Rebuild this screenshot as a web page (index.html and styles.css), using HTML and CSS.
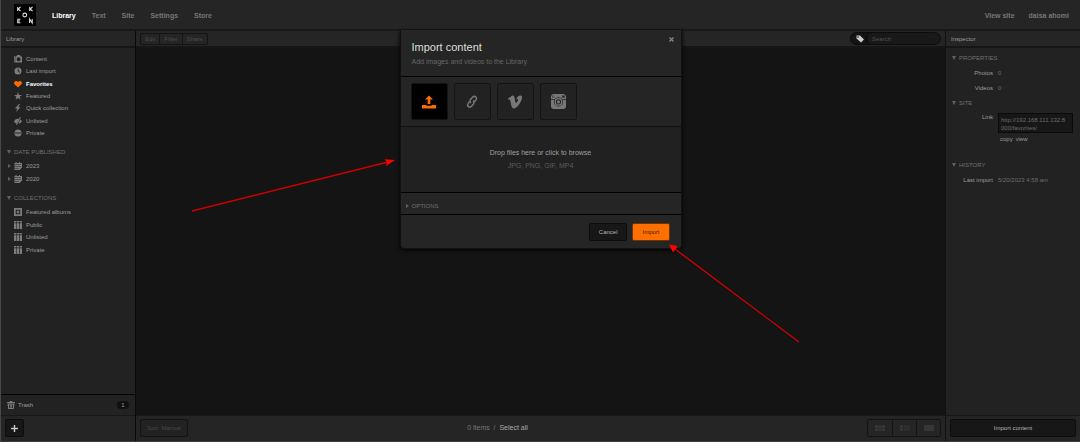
FILE: index.html
```html
<!DOCTYPE html>
<html lang="en">

<head>
    <meta charset="UTF-8">
    <meta name="viewport" content="width=device-width, initial-scale=1.0">
    <title>Koken - Library</title>
    <link rel="stylesheet" href="styles.css">
</head>

<body>
    <header class="topbar">
        <a class="logo" href="#" aria-label="Koken">
            <svg viewBox="0 0 22 22" fill="none" stroke="#ddd" stroke-width="1.1">
                <path d="M3.7 3v4M6.500 3 4.200 5l2.300 2M15.700 3v4M18.500 3l-2.300 2 2.300 2" />
                <circle cx="10.8" cy="11" r="1.9" />
                <path d="M6.4 15.200H3.800v3.600h2.600M3.800 17h2.300M15.600 19v-4l2.600 4v-4" />
            </svg>
        </a>
        <nav class="nav">
            <a class="active" href="#">Library</a>
            <a href="#">Text</a>
            <a href="#">Site</a>
            <a href="#">Settings</a>
            <a href="#">Store</a>
        </nav>
        <nav class="nav nav-user">
            <a href="#">View site</a>
            <a href="#">daisa ahomi</a>
        </nav>
    </header>

    <div class="columns">
        <aside class="sidebar">
            <h2 class="bar bar-title">Library</h2>
            <div class="side-body">
                <ul class="list list-main">
                    <li><a href="#">
                        <svg class="icon" viewBox="0 0 16 16"><path fill-rule="evenodd" d="M0 2h1.500v13H0zM2.500 3h2l2-3h5l2 3H16v12H2.500zM9.200 4.500a4 4 0 1 0 0 8 4 4 0 0 0 0-8z" /></svg>
                        Content</a></li>
                    <li><a href="#">
                        <svg class="icon" viewBox="0 0 16 16"><path fill-rule="evenodd" d="M8 1a7 7 0 1 0 0 14A7 7 0 0 0 8 1zM7.500 3v5.500l3.500 3 1-1.300L9.300 8V3z" /></svg>
                        Last import</a></li>
                    <li><a class="active" href="#">
                        <svg class="icon orange" viewBox="0 0 16 16"><path d="M8 15 1 8.500C-2 4 4-1 8 4c4-5 10 0 7 4.500z" /></svg>
                        Favorites</a></li>
                    <li><a href="#">
                        <svg class="icon" viewBox="0 0 16 16"><path d="m8 0 2 5.800h6l-4.800 3.600L13 15.500l-5-3.700-5 3.700 1.800-6.100L0 5.800h6z" /></svg>
                        Featured</a></li>
                    <li><a href="#">
                        <svg class="icon" viewBox="0 0 16 16"><path d="M10 0 2 9h4.500L4 16l9-9.500H8.500L12 0z" /></svg>
                        Quick collection</a></li>
                    <li><a href="#">
                        <svg class="icon" viewBox="0 0 16 16"><path d="M0 9c3-5 6-6 10-5L7 9l-2 4C3 12.500 1 11 0 9zM12 0h2L6 16H4zM12.500 5c2 1 3 2.500 3.500 4-2 2.500-4 4-7 4z" /></svg>
                        Unlisted</a></li>
                    <li><a href="#">
                        <svg class="icon" viewBox="0 0 16 16"><path fill-rule="evenodd" d="M8 1a7 7 0 1 0 0 14A7 7 0 0 0 8 1zM2.500 7h11v2h-11z" /></svg>
                        Private</a></li>
                </ul>

                <h3 class="heading">Date published</h3>
                <ul class="list list-dates">
                    <li><a href="#">
                        <svg class="icon" viewBox="0 0 16 16"><path fill-rule="evenodd" d="M1 2h2V0h2v2h5V0h2v2h4v9l-5 5H1zm1 3v1h12V5zm1 3v2h2V8zm4 0v2h2V8zm4 0v2h2V8zm-8 4v2h2v-2zm4 0v2h2v-2z" /></svg>
                        2023</a></li>
                    <li><a href="#">
                        <svg class="icon" viewBox="0 0 16 16"><path fill-rule="evenodd" d="M1 2h2V0h2v2h5V0h2v2h4v9l-5 5H1zm1 3v1h12V5zm1 3v2h2V8zm4 0v2h2V8zm4 0v2h2V8zm-8 4v2h2v-2zm4 0v2h2v-2z" /></svg>
                        2020</a></li>
                </ul>

                <h3 class="heading">Collections</h3>
                <ul class="list list-albums">
                    <li><a href="#">
                        <svg class="icon" viewBox="0 0 16 16"><path fill-rule="evenodd" d="M0 0h16v16H0zm3.500 3.500v9h9v-9z" /><path d="m8 4 1.500 2.500L12 8 9.500 9.500 8 12 6.500 9.500 4 8l2.500-1.500z" /></svg>
                        Featured albums</a></li>
                    <li><a href="#">
                        <svg class="icon" viewBox="0 0 16 16"><path d="M0 0h4.500v3H0zM5.700 0h4.500v3H5.700zM11.500 0H16v3h-4.500zM0 4.500h4.500V16H0zM5.700 4.500h4.500V16H5.700zM11.500 4.500H16V16h-4.500z" /></svg>
                        Public</a></li>
                    <li><a href="#">
                        <svg class="icon" viewBox="0 0 16 16"><path d="M0 0h4.500v3H0zM5.700 0h4.500v3H5.700zM11.500 0H16v3h-4.500zM0 4.500h4.500V16H0zM5.700 4.500h4.500V16H5.700zM11.500 4.500H16V16h-4.500z" /></svg>
                        Unlisted</a></li>
                    <li><a href="#">
                        <svg class="icon" viewBox="0 0 16 16"><path d="M0 0h4.500v3H0zM5.700 0h4.500v3H5.700zM11.500 0H16v3h-4.500zM0 4.500h4.500V16H0zM5.700 4.500h4.500V16H5.700zM11.500 4.500H16V16h-4.500z" /></svg>
                        Private</a></li>
                </ul>
            </div>
            <a class="trash" href="#">
                <svg class="icon" viewBox="0 0 16 16"><path fill-rule="evenodd" d="M0 2h5l1-2h4l1 2h5v2H0zm1 3h14l-1.500 11h-11zm3 2 .7 7h1.500L5.700 7zm3.200 0v2h1.600V7zm0 3.500V14h1.600v-3.500zM10.500 7l-.5 7h1.500l.7-7z" /></svg>
                Trash
                <span class="badge">1</span>
            </a>
            <div class="footer">
                <button class="btn btn-add" aria-label="New">
                    <svg viewBox="0 0 7 7" width="7" height="7"><path d="M3 0h1v3h3v1H4v3H3V4H0V3h3z" fill="#ccc" stroke="#ccc" stroke-width=".4" /></svg>
                </button>
            </div>
        </aside>

        <main class="content">
            <div class="bar toolbar">
                <div class="group">
                    <button>Edit</button>
                    <button>Filter</button>
                    <button>Share</button>
                </div>
                <div class="search">
                    <svg viewBox="0 0 16 16" width="8" height="8"><path fill-rule="evenodd" d="M1 1h7l8 8-6 6-9-8zm3 1.500a1.500 1.500 0 1 0 0 3 1.500 1.500 0 0 0 0-3z" fill="#ccc" /></svg>
                    <input type="text" placeholder="Search" aria-label="Search">
                </div>
            </div>
            <div class="canvas"></div>
            <div class="footer">
                <button class="btn btn-sort">Sort: Manual</button>
                <p class="status">0 items &nbsp;/&nbsp; <a href="#">Select all</a></p>
                <div class="views">
                    <button aria-label="Grid">
                        <svg viewBox="0 0 10 6" width="10" height="6"><path d="M0 0h3v3H0zM3.500 0h3v3h-3zM7 0h3v3H7zM0 3.500h3V6H0zM3.500 3.500h3V6h-3zM7 3.500h3V6H7z" /></svg>
                    </button>
                    <button aria-label="List">
                        <svg viewBox="0 0 10 6" width="10" height="6"><path d="M0 0h3v3H0zM0 3.500h3V6H0z" /><path d="M4 0h6v6H4z" opacity=".5" /></svg>
                    </button>
                    <button aria-label="Single">
                        <svg viewBox="0 0 10 6" width="10" height="6"><path d="M0 0h10v6H0z" /></svg>
                    </button>
                </div>
            </div>
        </main>

        <aside class="inspector">
            <h2 class="bar bar-title">Inspector</h2>
            <div class="inspector-body">
                <h3 class="heading">Properties</h3>
                <dl class="props">
                    <dt>Photos</dt>
                    <dd>0</dd>
                    <dt>Videos</dt>
                    <dd>0</dd>
                </dl>
                <h3 class="heading">Site</h3>
                <div class="props props-link">
                    <label for="link">Link</label>
                    <div>
                        <textarea id="link" class="link" rows="2" readonly>http://192.168.111.132:8000/favorites/</textarea>
                        <div class="link-actions">
                            <a href="#">copy</a>
                            <a href="#">view</a>
                        </div>
                    </div>
                </div>
                <h3 class="heading heading-history">History</h3>
                <dl class="props">
                    <dt>Last import</dt>
                    <dd>5/20/2023 4:58 am</dd>
                </dl>
            </div>
            <div class="footer">
                <button class="btn btn-import">Import content</button>
            </div>
        </aside>
    </div>

    <section class="modal" role="dialog" aria-labelledby="modal-title">
        <div class="modal-head">
            <h1 id="modal-title">Import content</h1>
            <p>Add images and videos to the Library</p>
            <button class="close" aria-label="Close">
                <svg viewBox="0 0 5 5" width="5" height="5"><path d="m.5.5 4 4m0-4-4 4" stroke="#888" stroke-width="1.200" /></svg>
            </button>
        </div>
        <div class="sources">
            <button class="selected" aria-label="Upload">
                <svg viewBox="0 0 14 14"><path d="M7 .5 3 4.500h2.700V9h2.600V4.500H11zM0 10h4.500v.8h5V10H14v3.500H0z" /></svg>
            </button>
            <button aria-label="Link">
                <svg viewBox="0 0 14 14"><g fill="none" stroke="#777" stroke-width="1.500" stroke-linecap="round"><path d="M5.500 7.500c-.8-1-.7-2 0-2.900l2.200-2.500c2-1.900 4.800.4 3.200 2.800L9.700 6.500" /><path d="M8.500 6c.8 1 .7 2 0 2.900l-2.200 2.500c-2 1.900-4.800-.4-3.200-2.800L4.300 7" /></g></svg>
            </button>
            <button aria-label="Vimeo">
                <svg viewBox="0 0 14 14"><path d="M0 3.600 4 .8c1.500-.6 2.200.3 2.500 1.700.4 2 .7 5.500 1.500 5.500.7 0 2-2.200 2-3.200 0-.9-.7-1-1.600-.7C9.300 1.200 11 .3 12.600.5c1.600.3 1.700 2 1 4C12.400 8.200 8.600 13.500 6 13.500c-2.300 0-2.600-3-3.200-5.500-.4-1.800-.7-3.600-1.300-3.600l-.9.500z" /></svg>
            </button>
            <button aria-label="Instagram">
                <svg class="wide" viewBox="0 0 16 16"><path fill-rule="evenodd" d="M2 0h12l2 2v3.500h-4a5 5 0 0 0-8 0H0V2zm10 1.500v2.500h2.500V1.500zM1.500 1.500V4H2V1.500zM3 1.500V4h.5V1.500zM0 6.500h3.400a5 5 0 1 0 9.200 0H16V14l-2 2H2l-2-2z" /><path fill-rule="evenodd" d="M8 4.200a4.200 4.200 0 1 0 0 8.400 4.200 4.200 0 0 0 0-8.400zm0 1.500a2.700 2.700 0 1 1 0 5.400 2.700 2.700 0 0 1 0-5.400z" /><circle cx="8" cy="8.400" r="1.700" /></svg>
            </button>
        </div>
        <label class="dropzone">
            <input type="file" multiple>
            <span>Drop files here or click to browse</span>
            <small>JPG, PNG, GIF, MP4</small>
        </label>
        <h3 class="heading options closed">Options</h3>
        <div class="modal-foot">
            <button class="btn">Cancel</button>
            <button class="btn btn-primary">Import</button>
        </div>
    </section>

    <!-- pointers to the drop area and the import button -->
    <svg class="arrows" viewBox="0 0 1080 442" width="1080" height="442">
        <g stroke="#d00000" stroke-width="1.400">
            <path d="M192 211 388 162" />
            <path d="M799 342 675 249" />
        </g>
        <path d="M395 160 384.500 159.200 387 162 386 166z" fill="#f00" />
        <path d="M669 244.500 677.500 246 675.500 249 673 252.500z" fill="#f00" />
    </svg>
</body>

</html>
```

FILE: styles.css
```css
* {
    margin: 0;
    padding: 0;
    box-sizing: border-box;
    list-style: none;
}

body {
    display: flex;
    flex-direction: column;
    height: 100vh;
    position: relative;
    overflow: hidden;
    border-left: 1px solid #484848;
    border-bottom: 1px solid #3a3a3a;
    background-color: #141414;
    color: #9c9c9c;
    font-family: "Liberation Sans", Arial, sans-serif;
    font-size: 6px;
    line-height: 12px;
}

a {
    color: inherit;
    text-decoration: none;
}

button,
input,
textarea {
    font: inherit;
    color: inherit;
    background: none;
    border: none;
    outline: none;
}

button {
    display: flex;
    align-items: center;
    justify-content: center;
    cursor: pointer;
}

svg {
    display: block;
}

/* top navigation */
.topbar {
    display: flex;
    align-items: center;
    height: 31px;
    flex-shrink: 0;
    padding: 0 11px 0 13px;
    background-color: #252525;
    border-bottom: 2px solid #191919;
}

.logo {
    width: 22px;
    height: 22px;
    margin-right: 16px;
    background-color: #000;
}

.nav {
    display: flex;
    gap: 16px;
    padding-top: 2px;
    color: #777;
    font-size: 7px;
    font-weight: bold;
}

.nav-user {
    gap: 14px;
    margin-left: auto;
}

.active {
    color: #fff;
    font-weight: bold;
}

/* columns */
.columns {
    display: grid;
    grid-template-columns: 135px 1fr 135px;
    flex: 1;
    min-height: 0;
}

.sidebar,
.content,
.inspector {
    display: flex;
    flex-direction: column;
    min-width: 0;
    min-height: 0;
}

.sidebar {
    background-color: #222;
    border-right: 1px solid #090909;
}

.inspector {
    background-color: #222;
    border-left: 1px solid #101010;
}

.bar {
    display: flex;
    align-items: center;
    height: 17px;
    flex-shrink: 0;
    background-color: #252525;
    border-bottom: 2px solid #161616;
}

.bar-title {
    padding: 0 5px;
    font-size: 6px;
    font-weight: normal;
}

.footer {
    display: flex;
    align-items: center;
    height: 26px;
    flex-shrink: 0;
    padding: 0 4px 1px;
    background-color: #252525;
    border-top: 1px solid #181818;
}

.btn {
    height: 18px;
    padding: 0 9px;
    border: 1px solid #0c0c0c;
    border-radius: 2px;
    background-color: #171717;
    color: #b4b4b4;
}

/* sidebar */
.side-body {
    flex: 1;
    padding-top: 5px;
    overflow: hidden;
}

.icon {
    width: 8px;
    height: 8px;
    margin-right: 4px;
    flex-shrink: 0;
    fill: #7c7c7c;
}

.orange {
    fill: #ff6a00;
}

.list {
    display: grid;
    align-content: space-between;
}

.list a {
    display: flex;
    align-items: center;
    padding-left: 13px;
}

.list-main {
    min-height: 86px;
}

.list-dates {
    min-height: 25px;
}

.list-albums {
    min-height: 50px;
}

.heading {
    display: flex;
    align-items: center;
    margin: 7px 0 2px;
    padding-left: 6px;
    color: #707070;
    font-size: 6px;
    font-weight: normal;
    text-transform: uppercase;
}

.heading::before {
    content: "";
    margin-right: 3px;
    border: 2px solid transparent;
    border-top: 4px solid #606060;
    border-bottom: none;
}

.list .active {
    color: #fff;
}

.list-dates a {
    padding-left: 7px;
}

.list-dates a::before,
.closed::before {
    content: "";
    margin-right: 3px;
    border: 2px solid transparent;
    border-left: 3px solid #606060;
    border-right: none;
}

.trash {
    display: flex;
    align-items: center;
    height: 21px;
    padding: 0 6px;
    border-top: 1px solid #050505;
}

.trash .icon {
    margin-right: 3px;
}

.badge {
    width: 12px;
    margin-left: auto;
    border-radius: 4px;
    background-color: #111;
    line-height: 8px;
    text-align: center;
}

.btn-add {
    width: 19px;
    padding: 0;
}

/* content */
.toolbar {
    justify-content: space-between;
    padding: 0 4px;
}

.group,
.views {
    display: flex;
    border: 1px solid #141414;
    border-radius: 2px;
    color: #4a4a4a;
}

.group button {
    height: 10px;
    padding: 0 4px;
}

.group button + button,
.views button + button {
    border-left: 1px solid #141414;
}

.search {
    display: flex;
    align-items: center;
    width: 91px;
    height: 13px;
    padding-left: 5px;
    border: 1px solid #0c0c0c;
    border-radius: 7px;
    background-color: #141414;
}

.search input {
    flex: 1;
    min-width: 0;
    height: 11px;
    margin-left: 2px;
    padding-left: 5px;
    border-left: 1px solid #090909;
    border-radius: 6px;
    background-color: #191919;
}

.search input::placeholder {
    color: #505050;
}

.canvas {
    flex: 1;
}

.btn-sort {
    padding: 0 6px;
    border-color: #141414;
    background-color: #222;
    color: #484848;
}

.status {
    flex: 1;
    margin-right: 60px;
    color: #757575;
    font-size: 7px;
    text-align: center;
}

.status a {
    color: #aaa;
}

.views button {
    width: 24px;
    height: 16px;
}

.views svg {
    fill: #363636;
}

/* inspector */
.inspector-body {
    flex: 1;
    padding-top: 4px;
}

.inspector-body .heading {
    margin: 0;
}

.inspector-body .heading-history {
    margin-top: 13px;
}

.props {
    display: grid;
    grid-template-columns: 47px 1fr;
    column-gap: 5px;
    padding-right: 7px;
    line-height: 15px;
}

.props-link {
    padding-top: 1px;
}

dt,
.props label {
    text-align: right;
}

dl.props {
    padding-top: 2px;
}

dl.props + .heading {
    padding-top: 1px;
}

dd {
    color: #6c6c6c;
}

.link {
    display: block;
    width: 100%;
    height: 20px;
    margin-top: 3px;
    padding: 2px 5px 0 2px;
    border: 1px solid #0a0a0a;
    background-color: #171717;
    color: #6c6c6c;
    line-height: 8px;
    word-break: break-all;
    resize: none;
    overflow: hidden;
}

.link-actions {
    display: flex;
    gap: 3px;
    padding-left: 2px;
    line-height: 13px;
}

.btn-import {
    flex: 1;
}

/* import dialog */
.modal {
    position: absolute;
    top: 30px;
    left: 50%;
    width: 282px;
    transform: translateX(-50%);
    border: 1px solid #111;
    border-top: none;
    border-radius: 0 0 4px 4px;
    background-color: #252525;
    box-shadow: 0 1px 4px #000;
}

.modal-head {
    position: relative;
    padding: 10px 11px 8px;
    border-bottom: 1px solid #000;
    font-size: 7px;
    color: #666;
}

.modal-head h1 {
    margin-bottom: 2px;
    color: #ddd;
    font-size: 11px;
    font-weight: normal;
    line-height: 14px;
}

.close {
    position: absolute;
    top: 7px;
    right: 7px;
}

.sources {
    display: flex;
    gap: 6px;
    padding: 6px 10px;
    border-bottom: 1px solid #101010;
}

.sources button {
    width: 37px;
    height: 37px;
    border: 1px solid #141414;
    border-radius: 2px;
    background-color: #222;
}

.sources svg {
    width: 14px;
    height: 14px;
    fill: #777;
}

.sources .wide {
    width: 15px;
    height: 15px;
}

.sources .selected {
    background-color: #000;
}

.sources .selected svg {
    fill: #ff6a00;
}

.dropzone {
    display: flex;
    flex-direction: column;
    align-items: center;
    justify-content: center;
    gap: 1px;
    height: 66px;
    border-bottom: 1px solid #000;
    background-color: #212121;
    color: #a0a0a0;
    font-size: 7px;
    cursor: pointer;
}

.dropzone input {
    display: none;
}

.dropzone small {
    color: #5c5c5c;
    font-size: 7px;
}

.options {
    margin: 0;
    padding: 7px 5px 2px;
    border-bottom: 1px solid #000;
}

.options.closed::before {
    border: 2px solid transparent;
    border-left: 3px solid #606060;
    border-right: none;
}

.modal-foot {
    display: flex;
    justify-content: flex-end;
    gap: 5px;
    padding: 8px 11px 7px;
}

.btn-primary {
    border-color: #713200;
    background-color: #ff6f00;
    color: #402000;
}

.arrows {
    position: absolute;
    top: 0;
    left: -1px;
    pointer-events: none;
}
```
